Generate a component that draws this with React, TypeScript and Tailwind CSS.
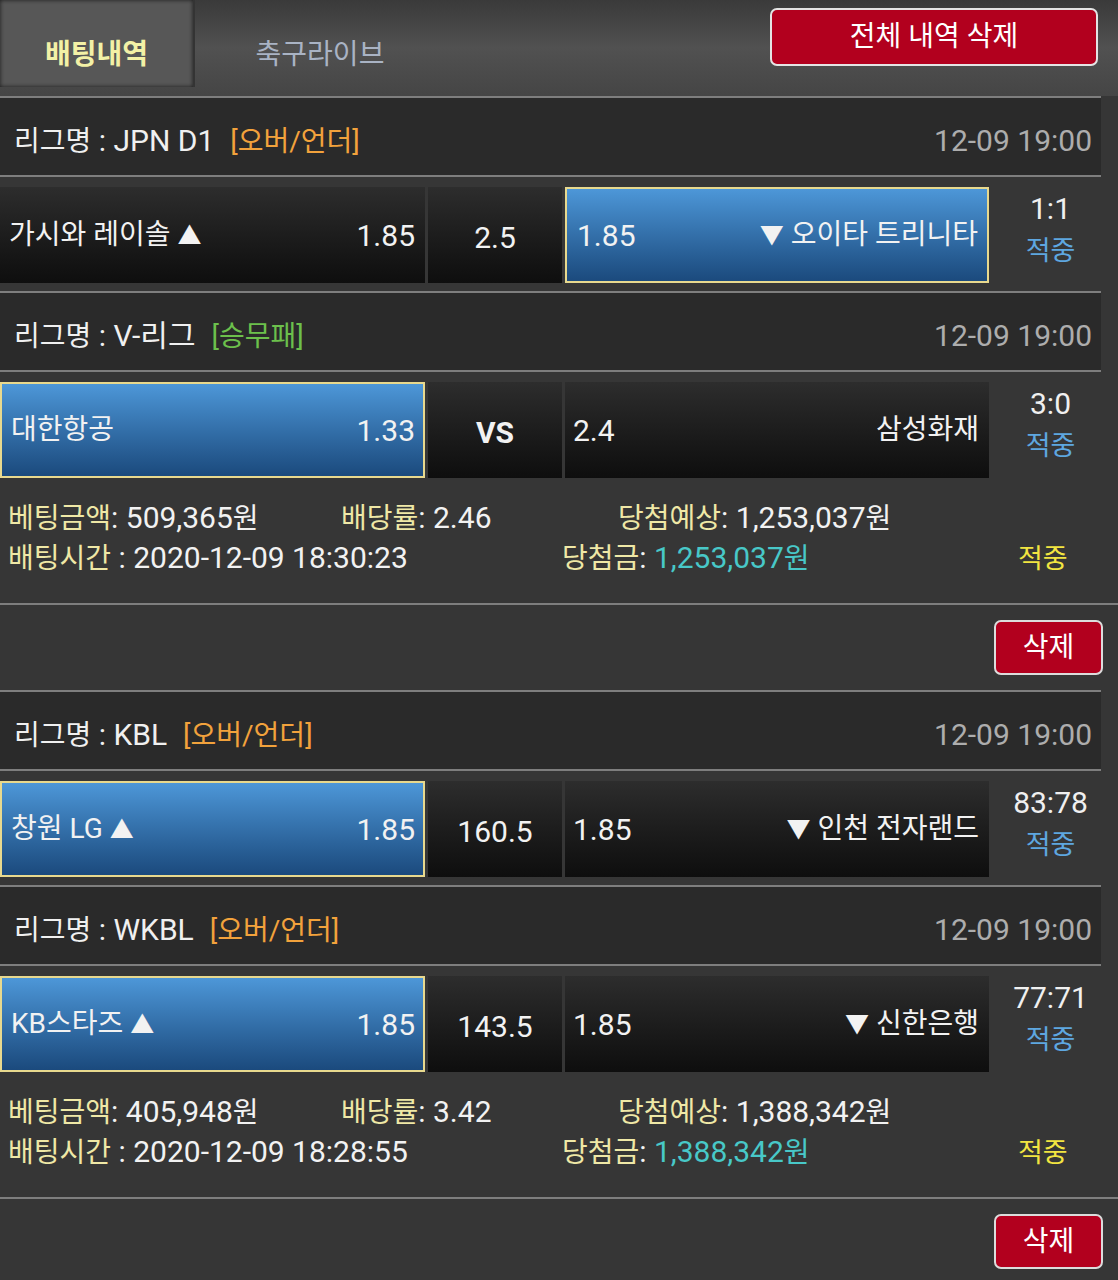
import React from 'react';

type Match = {
  league: string;
  type: string;
  typeColor: string;
  date: string;
  home: string;
  homeOdds: string;
  mid: string;
  midBold?: boolean;
  awayOdds: string;
  away: string;
  pick: 'home' | 'away';
  score: string;
};

type Bet = {
  matches: Match[];
  amount: string;
  rate: string;
  expected: string;
  time: string;
  win: string;
};

const bets: Bet[] = [
  {
    matches: [
      {
        league: 'JPN D1',
        type: '[오버/언더]',
        typeColor: 'text-[#f2a23c]',
        date: '12-09 19:00',
        home: '가시와 레이솔 ▲',
        homeOdds: '1.85',
        mid: '2.5',
        awayOdds: '1.85',
        away: '▼ 오이타 트리니타',
        pick: 'away',
        score: '1:1',
      },
      {
        league: 'V-리그',
        type: '[승무패]',
        typeColor: 'text-[#6cc04c]',
        date: '12-09 19:00',
        home: '대한항공',
        homeOdds: '1.33',
        mid: 'VS',
        midBold: true,
        awayOdds: '2.4',
        away: '삼성화재',
        pick: 'home',
        score: '3:0',
      },
    ],
    amount: '509,365',
    rate: '2.46',
    expected: '1,253,037',
    time: '2020-12-09 18:30:23',
    win: '1,253,037',
  },
  {
    matches: [
      {
        league: 'KBL',
        type: '[오버/언더]',
        typeColor: 'text-[#f2a23c]',
        date: '12-09 19:00',
        home: '창원 LG ▲',
        homeOdds: '1.85',
        mid: '160.5',
        awayOdds: '1.85',
        away: '▼ 인천 전자랜드',
        pick: 'home',
        score: '83:78',
      },
      {
        league: 'WKBL',
        type: '[오버/언더]',
        typeColor: 'text-[#f2a23c]',
        date: '12-09 19:00',
        home: 'KB스타즈 ▲',
        homeOdds: '1.85',
        mid: '143.5',
        awayOdds: '1.85',
        away: '▼ 신한은행',
        pick: 'home',
        score: '77:71',
      },
    ],
    amount: '405,948',
    rate: '3.42',
    expected: '1,388,342',
    time: '2020-12-09 18:28:55',
    win: '1,388,342',
  },
];

const font = { fontFamily: 'Roboto, "Noto Sans CJK KR", sans-serif' };

const dark = 'bg-gradient-to-b from-[#2d2d2d] to-[#0e0e0e]';
const blue = 'bg-gradient-to-b from-[#4d97d8] to-[#1b4a7d] border-2 border-[#e8d98e]';

// shrink the arrow glyphs a little, they come out bigger than the rest
const Team = ({ name }: { name: string }) => (
  <span className="text-[28px]">
    {name.split(/([▲▼])/).map((part, i) =>
      part === '▲' || part === '▼' ? (
        <span key={i} className="text-[24px]">
          {part}
        </span>
      ) : (
        part
      )
    )}
  </span>
);

const Line = ({ full }: { full?: boolean }) => (
  <div className={`h-[2px] bg-[#7e7e7e] ${full ? 'w-full' : 'w-[1101px]'}`} />
);

const LeagueRow = ({ m }: { m: Match }) => (
  <div className="w-[1101px]">
    <Line />
    <div className="h-[77px] bg-[#2a2a2a] flex items-center justify-between pl-[14px] pr-[9px] pt-[8px]">
      <div className="text-[#f0f0f0] flex items-baseline">
        <span className="text-[28px]">리그명</span>
        <span className="text-[30px]">&nbsp;: {m.league}</span>
        <span className={`ml-[16px] text-[28px] ${m.typeColor}`}>{m.type}</span>
      </div>
      <span className="text-[30px] text-[#adadad]">{m.date}</span>
    </div>
    <Line />
  </div>
);

const MatchRow = ({ m }: { m: Match }) => (
  <div className="h-[114px] pt-[10px] pb-[8px] w-[1101px] flex gap-[3px]">
    <div
      className={`w-[425px] h-[96px] flex items-center justify-between ${
        m.pick === 'home' ? `${blue} pl-[9px] pr-[8px]` : `${dark} pl-[9px] pr-[10px]`
      }`}
    >
      <Team name={m.home} />
      <span className="text-[30px]">{m.homeOdds}</span>
    </div>
    <div className={`w-[134px] h-[96px] flex items-center justify-center pt-[4px] ${dark}`}>
      <span className={`text-[30px] ${m.midBold ? 'font-bold' : ''}`}>{m.mid}</span>
    </div>
    <div
      className={`w-[424px] h-[96px] flex items-center justify-between ${
        m.pick === 'away' ? `${blue} pl-[10px] pr-[9px]` : `${dark} pl-[8px] pr-[10px]`
      }`}
    >
      <span className="text-[30px]">{m.awayOdds}</span>
      <Team name={m.away} />
    </div>
    <div className="w-[109px] h-[96px] flex flex-col items-center pl-[8px] pt-[1px] leading-[42px]">
      <span className="text-[30px] text-[#f0f0f0]">{m.score}</span>
      <span className="text-[27px] text-[#5ea7e0]">적중</span>
    </div>
  </div>
);

const Label = ({ children }: { children: React.ReactNode }) => (
  <span className="text-[28px] text-[#efe8a6]">{children}</span>
);

const BetBlock = ({ b }: { b: Bet }) => (
  <div>
    {b.matches.map((m, i) => (
      <div key={i}>
        <LeagueRow m={m} />
        <MatchRow m={m} />
      </div>
    ))}
    <div className="h-[117px] pt-[12px] pl-[8px] text-[#f2f2f2]">
      <div className="flex items-baseline h-[40px] leading-[40px]">
        <div className="w-[333px]">
          <Label>베팅금액</Label>
          <span className="text-[30px]">: {b.amount}</span>
          <span className="text-[28px]">원</span>
        </div>
        <div className="w-[277px]">
          <Label>배당률</Label>
          <span className="text-[30px]">: {b.rate}</span>
        </div>
        <div>
          <Label>당첨예상</Label>
          <span className="text-[30px]">: {b.expected}</span>
          <span className="text-[28px]">원</span>
        </div>
      </div>
      <div className="flex items-baseline h-[40px] leading-[40px]">
        <div className="w-[554px]">
          <Label>배팅시간</Label>
          <span className="text-[30px]"> : {b.time}</span>
        </div>
        <div className="w-[456px]">
          <Label>당첨금</Label>
          <span className="text-[30px]">: </span>
          <span className="text-[30px] text-[#48c8c8]">{b.win}</span>
          <span className="text-[28px] text-[#48c8c8]">원</span>
        </div>
        <span className="text-[27px] text-[#f2e541]">적중</span>
      </div>
    </div>
    <Line full />
    <div className="h-[85px] flex justify-end items-start pt-[15px] pr-[15px]">
      <button className="w-[109px] h-[55px] rounded-[7px] border-2 border-[#dcdcdc] bg-[#b2001e] text-white text-[28px] flex items-center justify-center">
        삭제
      </button>
    </div>
  </div>
);

export default function App() {
  return (
    <div className="w-[1118px] min-h-[1280px] bg-[#363636] text-[#f2f2f2] overflow-hidden" style={font}>
      <div className="h-[96px] bg-gradient-to-b from-[#3a3a3a] via-[#515151] to-[#454545] flex items-start">
        <div className="w-[195px] h-[87px] bg-[#575757] shadow-[inset_0_0_4px_rgba(0,0,0,0.7)] border-r-2 border-[#343434] flex items-center justify-center pt-[22px]">
          <span className="text-[28px] font-bold text-[#f3f1a6]">배팅내역</span>
        </div>
        <div className="w-[250px] h-[87px] flex items-center justify-center pt-[22px]">
          <span className="text-[28px] text-[#a9b3c4]">축구라이브</span>
        </div>
        <button className="ml-auto mt-[8px] mr-[20px] w-[328px] h-[58px] rounded-[7px] border-2 border-[#e4e4e4] bg-[#b2001e] text-white text-[28px] flex items-center justify-center">
          전체 내역 삭제
        </button>
      </div>
      {bets.map((b, i) => (
        <BetBlock key={i} b={b} />
      ))}
    </div>
  );
}
